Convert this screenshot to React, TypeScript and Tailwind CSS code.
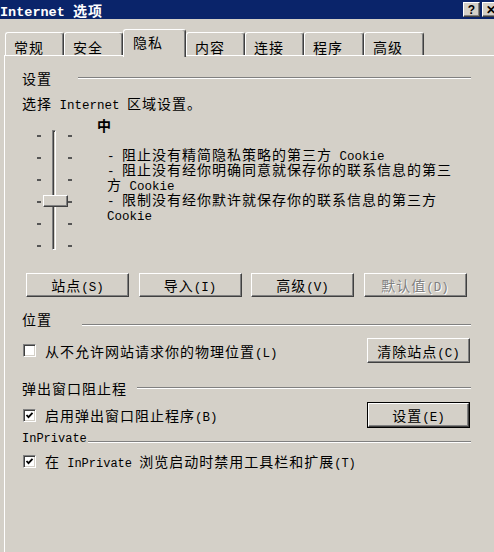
import React from "react";

const LAT = "font-['Liberation_Mono',monospace] text-[12.5px] tracking-normal leading-[8px]";
const LAT_TITLE = "font-['Liberation_Mono',monospace] text-[13.5px] tracking-normal leading-[8px]";
const LAT_SMALL = "font-['Liberation_Mono',monospace] text-[12px] tracking-normal leading-[8px]";

// wrap ascii runs in a mono span, leave CJK to the parent font
function mix(text: string, latin: string = LAT) {
  return text
    .split(/([\x20-\x7e]+)/)
    .filter(Boolean)
    .map((s, i) =>
      /^[\x20-\x7e]+$/.test(s) ? (
        <span key={i} className={latin}>
          {s}
        </span>
      ) : (
        <React.Fragment key={i}>{s}</React.Fragment>
      )
    );
}

const raised =
  "bg-[#d4d0c8] border border-t-white border-l-white border-r-[#404040] border-b-[#404040] shadow-[inset_-1px_-1px_0_#808080]";

function TitleBtn({ children }: { children: React.ReactNode }) {
  return (
    <div
      className={`${raised} w-[17px] h-[15px] flex items-center justify-center text-black font-bold font-['Liberation_Sans',sans-serif] text-[12px] tracking-normal leading-none`}
    >
      {children}
    </div>
  );
}

function Tab({ label, w, active }: { label: string; w: string; active?: boolean }) {
  return (
    <div
      className={`${w} ${
        active ? "relative z-10 h-[28px] -mb-[2px] pt-[4px] pl-[9px]" : "h-[23px] pt-[6px] pl-[8px]"
      } bg-[#d4d0c8] border-t border-l border-white border-r border-r-[#404040] shadow-[inset_-1px_0_0_#808080] rounded-t-[3px]`}
    >
      {label}
    </div>
  );
}

function Header({ label, lw, small, low }: { label: string; lw: string; small?: boolean; low?: boolean }) {
  if (small) {
    return (
      <div className="flex items-end h-[14px]">
        <div className={`${lw} font-['Liberation_Mono',monospace] text-[12px] tracking-normal leading-[14px]`}>{label}</div>
        <div className="flex-1 h-0 border-t border-t-[#808080] border-b border-b-white mb-[3px]" />
      </div>
    );
  }
  return (
    <div className={`flex h-[16px] ${low ? "items-end" : "items-center"}`}>
      <div className={`${lw} self-start`}>{label}</div>
      <div className={`flex-1 h-0 border-t border-t-[#808080] border-b border-b-white ${low ? "mb-[1px]" : ""}`} />
    </div>
  );
}

function Button({ label, disabled, def, h = "h-[24px]" }: { label: string; disabled?: boolean; def?: boolean; h?: string }) {
  const inner = (
    <div
      className={`${raised} ${def ? "h-full" : h} w-full flex items-center justify-center ${
        disabled ? "text-[#808080] [text-shadow:1px_1px_0_#ffffff]" : ""
      }`}
    >
      <span>{mix(label)}</span>
    </div>
  );
  if (def) {
    return <div className={`w-[103px] ${h} border border-black`}>{inner}</div>;
  }
  return <div className="w-[103px]">{inner}</div>;
}

function Check({ checked }: { checked?: boolean }) {
  return (
    <div className="w-[13px] h-[13px] shrink-0 bg-white border-t border-l border-t-[#808080] border-l-[#808080] border-b border-r border-b-white border-r-white shadow-[inset_1px_1px_0_#404040,inset_-1px_-1px_0_#d4d0c8] flex items-center justify-center">
      {checked && (
        <svg width="9" height="9" viewBox="0 0 9 9">
          <polyline points="1.5,4 3.5,6.2 7.5,1.8" fill="none" stroke="#000" strokeWidth="1.8" />
        </svg>
      )}
    </div>
  );
}

function Slider() {
  const ticks = [0, 1, 2, 3, 4, 5];
  return (
    <div className="relative w-[38px] h-[120px] flex">
      <div className="w-[4px] ml-[1px] pt-[5px] flex flex-col gap-[20px]">
        {ticks.map((t) => (
          <div key={t} className="w-[4px] h-[2px] bg-[#555555]" />
        ))}
      </div>
      <div className="w-[4px] h-[120px] ml-[11px] border-l border-t border-l-[#808080] border-t-[#808080] border-r border-b border-r-white border-b-white shadow-[inset_1px_1px_0_#404040]" />
      <div className="w-[4px] ml-[12px] pt-[5px] flex flex-col gap-[20px]">
        {ticks.map((t) => (
          <div key={t} className="w-[4px] h-[2px] bg-[#555555]" />
        ))}
      </div>
      {/* thumb */}
      <div className={`${raised} absolute left-[7px] top-[65px] w-[25px] h-[12px]`} />
    </div>
  );
}

export default function App() {
  return (
    <div className="w-[494px] h-[552px] overflow-hidden bg-[#d4d0c8] text-black font-['Noto_Sans_CJK_SC',sans-serif] text-[14px] tracking-[1px] leading-[16px]">
      <div className="h-[19px] bg-[#0a246a] flex items-center justify-between overflow-hidden">
        <div className="text-white font-bold">{mix("Internet 选项", LAT_TITLE)}</div>
        <div className="flex gap-[2px] mr-[-5px]">
          <TitleBtn>?</TitleBtn>
          <TitleBtn>✕</TitleBtn>
        </div>
      </div>

      <div className="flex items-end pl-[5px] mt-[10px]">
        <Tab label="常规" w="w-[59px]" />
        <Tab label="安全" w="w-[59px]" />
        <Tab label="隐私" w="w-[63px]" active />
        <Tab label="内容" w="w-[59px]" />
        <Tab label="连接" w="w-[59px]" />
        <Tab label="程序" w="w-[60px]" />
        <Tab label="高级" w="w-[60px]" />
      </div>

      <div className="ml-[4px] h-[500px] border-t border-l border-white pl-[17px] pt-[14px]">
        <div className="w-[449px] flex flex-col">
          <Header label="设置" lw="w-[56px]" />
          <div className="mt-[9px]">{mix("选择 Internet 区域设置。")}</div>

          <div className="mt-[6px] flex">
            <div className="w-[75px] pl-[14px] pt-[13px]">
              <Slider />
            </div>
            <div className="flex flex-col">
              <div className="font-bold">中</div>
              <div className="mt-[14px] ml-[10px] w-[350px] leading-[15px]">
                <div>{mix("- 阻止没有精简隐私策略的第三方 Cookie")}</div>
                <div>{mix("- 阻止没有经你明确同意就保存你的联系信息的第三方 Cookie")}</div>
                <div>{mix("- 限制没有经你默许就保存你的联系信息的第三方 Cookie")}</div>
              </div>
            </div>
          </div>

          <div className="mt-[23px] pl-[4px] flex gap-[9.5px]">
            <Button label="站点(S)" />
            <Button label="导入(I)" />
            <Button label="高级(V)" />
            <Button label="默认值(D)" disabled />
          </div>

          <div className="mt-[14px]">
            <Header label="位置" lw="w-[60px]" low />
          </div>
          <div className="mt-[11px] h-[25px] flex items-center justify-between pl-[1px] pr-[1px]">
            <div className="flex items-center gap-[9px]">
              <Check />
              <span>{mix("从不允许网站请求你的物理位置(L)")}</span>
            </div>
            <Button label="清除站点(C)" h="h-[25px]" />
          </div>

          <div className="mt-[17px]">
            <Header label="弹出窗口阻止程" lw="w-[115px]" />
          </div>
          <div className="mt-[6px] h-[26px] flex items-center justify-between pl-[1px] pr-[1px]">
            <div className="flex items-center gap-[9px]">
              <Check checked />
              <span>{mix("启用弹出窗口阻止程序(B)")}</span>
            </div>
            <Button label="设置(E)" def h="h-[26px]" />
          </div>

          <div className="mt-[4px]">
            <Header label="InPrivate" lw="w-[66px]" small />
          </div>
          <div className="mt-[7px] h-[16px] flex items-center gap-[9px] pl-[1px]">
            <Check checked />
            <span>{mix("在 InPrivate 浏览启动时禁用工具栏和扩展(T)", LAT_SMALL)}</span>
          </div>
        </div>
      </div>
    </div>
  );
}
